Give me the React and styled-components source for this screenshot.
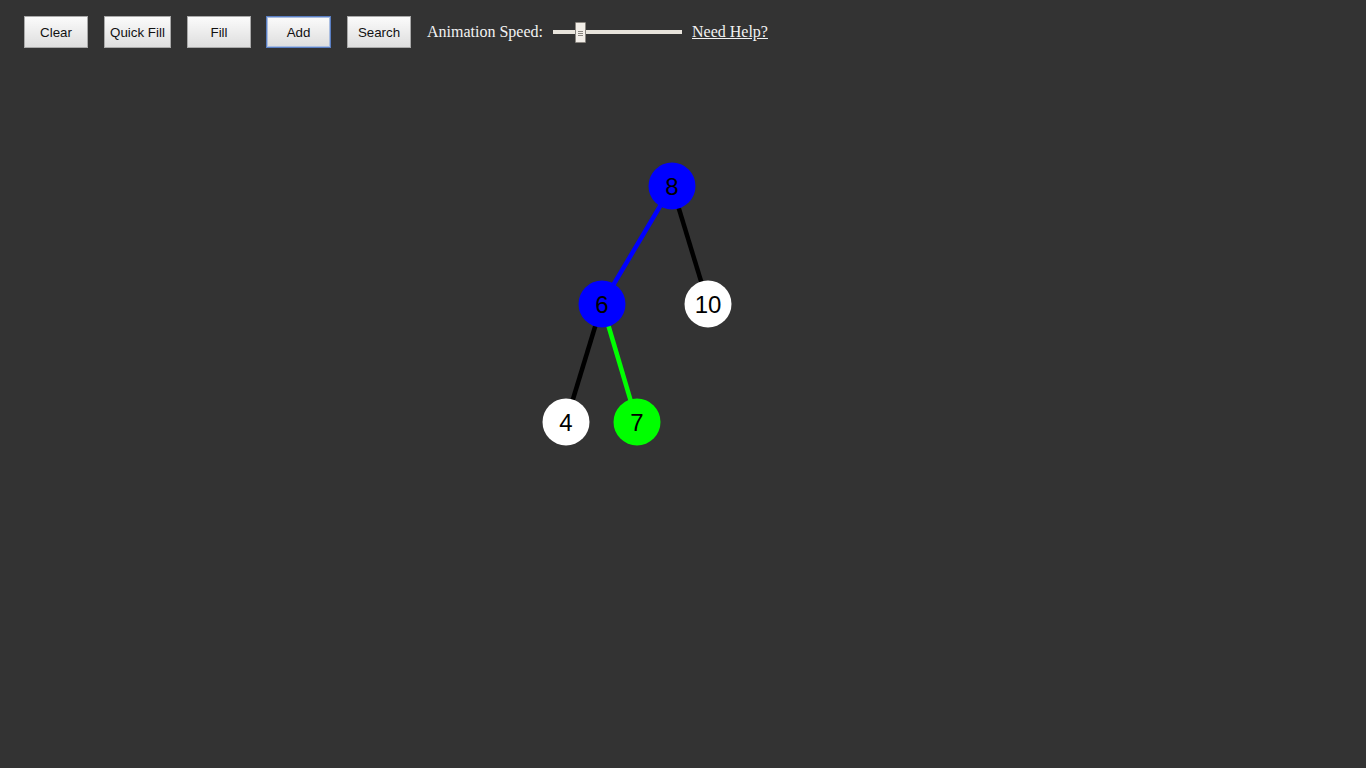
import React from "react";
import styled, { createGlobalStyle } from "styled-components";

const GlobalStyle = createGlobalStyle`
  html, body {
    margin: 0;
    padding: 0;
    background-color: #333333;
  }
`;

const Page = styled.div`
  display: flex;
  flex-direction: column;
  width: 100vw;
  height: 100vh;
  background-color: #333333;
  overflow: hidden;
`;

const Toolbar = styled.div`
  display: flex;
  align-items: center;
  padding: 16px 24px 0;
  height: 32px;
`;

const Button = styled.button`
  height: 32px;
  width: ${(p) => p.$w || 64}px;
  padding: 0;
  margin-right: ${(p) => p.$gap || 16}px;
  font-family: "Liberation Sans", Arial, sans-serif;
  font-size: 13.333px;
  color: #111;
  background: linear-gradient(#fbfbfb, #dedede);
  border: 1px solid ${(p) => (p.$focused ? "#5a7fc4" : "#a9a9a9")};
  box-shadow: ${(p) => (p.$focused ? "inset 0 0 0 1px #a9bde0" : "none")};
  border-radius: 0;
  cursor: pointer;
`;

const Label = styled.span`
  font-family: "Liberation Serif", "Times New Roman", serif;
  font-size: 16px;
  color: #f2f2f2;
  margin-right: 10px;
`;

const Slider = styled.input`
  -webkit-appearance: none;
  appearance: none;
  width: 129px;
  height: 22px;
  margin: 0 10px 0 0;
  background: transparent;

  &::-webkit-slider-runnable-track {
    height: 4px;
    background: #e8e4dc;
  }

  &::-webkit-slider-thumb {
    -webkit-appearance: none;
    width: 11px;
    height: 21px;
    margin-top: -8px;
    border: 1px solid #8a8680;
    border-radius: 1px;
    background:
      linear-gradient(#8a8680, #8a8680) center 8px / 5px 1px no-repeat,
      linear-gradient(#8a8680, #8a8680) center 10px / 5px 1px no-repeat,
      linear-gradient(#8a8680, #8a8680) center 12px / 5px 1px no-repeat,
      #f2eee8;
    box-sizing: border-box;
  }
`;

const HelpLink = styled.a`
  font-family: "Liberation Serif", "Times New Roman", serif;
  font-size: 16px;
  color: #f2f2f2;
  text-decoration: underline;
`;

const Canvas = styled.svg`
  display: block;
  flex: 1;
  width: 100%;
`;

const NodeLabel = styled.text`
  font-family: "Liberation Sans", Arial, sans-serif;
  font-size: 24px;
  fill: #000;
`;

const TOP = 48;

const nodes = [
  { id: 8, x: 672, y: 186, fill: "#0000ff" },
  { id: 6, x: 602, y: 304, fill: "#0000ff" },
  { id: 10, x: 708, y: 304, fill: "#ffffff" },
  { id: 4, x: 566, y: 422, fill: "#ffffff" },
  { id: 7, x: 637, y: 422, fill: "#00ff00" },
];

const edges = [
  { from: 8, to: 6, color: "#0000ff" },
  { from: 8, to: 10, color: "#000000" },
  { from: 6, to: 4, color: "#000000" },
  { from: 6, to: 7, color: "#00ff00" },
];

function Tree() {
  const byId = Object.fromEntries(nodes.map((n) => [n.id, n]));
  return (
    <Canvas viewBox={`0 ${TOP} 1366 ${768 - TOP}`} preserveAspectRatio="xMinYMin meet">
      {edges.map((e) => {
        const a = byId[e.from];
        const b = byId[e.to];
        return (
          <line
            key={`${e.from}-${e.to}`}
            x1={a.x}
            y1={a.y}
            x2={b.x}
            y2={b.y}
            stroke={e.color}
            strokeWidth="4.5"
          />
        );
      })}
      {nodes.map((n) => (
        <g key={n.id}>
          <circle cx={n.x} cy={n.y} r="23.5" fill={n.fill} />
          <NodeLabel x={n.x} y={n.y + 9} textAnchor="middle">
            {n.id}
          </NodeLabel>
        </g>
      ))}
    </Canvas>
  );
}

export default function App() {
  return (
    <Page>
      <GlobalStyle />
      <Toolbar>
        <Button>Clear</Button>
        <Button $w={67}>Quick Fill</Button>
        <Button $gap={15}>Fill</Button>
        <Button $w={65} $focused>Add</Button>
        <Button>Search</Button>
        <Label>Animation Speed:</Label>
        <Slider type="range" min="0" max="100" defaultValue="19" />
        <HelpLink href="#">Need Help?</HelpLink>
      </Toolbar>
      <Tree />
    </Page>
  );
}
